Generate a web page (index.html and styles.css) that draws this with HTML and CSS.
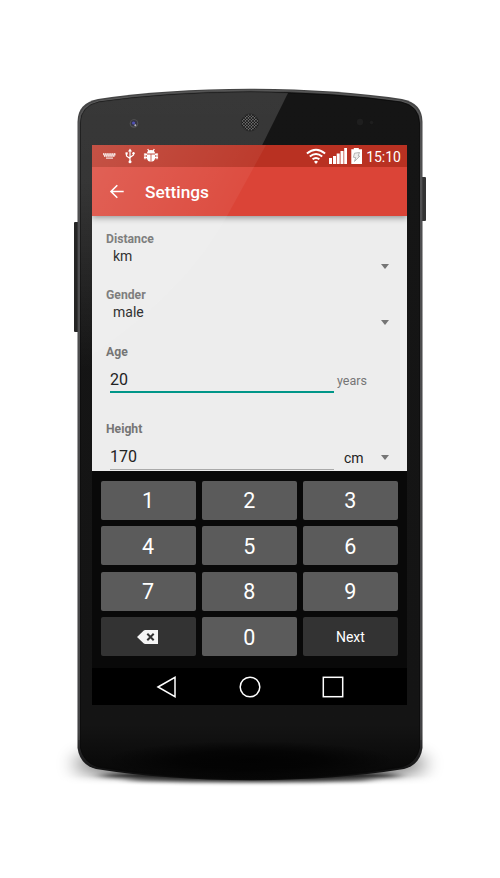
FILE: index.html
```html
<!DOCTYPE html>
<html lang="en">
<head>
<meta charset="utf-8">
<title>Settings</title>
<link rel="stylesheet" href="styles.css">
</head>
<body>
<main class="stage">
  <svg class="device" viewBox="0 0 500 878" aria-hidden="true">
    <defs>
      <linearGradient id="face" x1="0" y1="88" x2="0" y2="780" gradientUnits="userSpaceOnUse">
        <stop offset="0" stop-color="#151515"/><stop offset=".92" stop-color="#141414"/><stop offset="1" stop-color="#060606"/>
      </linearGradient>
      <radialGradient id="base"><stop offset="0" stop-color="#000"/><stop offset=".5" stop-color="#000" stop-opacity=".8"/><stop offset="1" stop-color="#000" stop-opacity="0"/></radialGradient>
      <linearGradient id="rim" x1="0" y1="88" x2="0" y2="780" gradientUnits="userSpaceOnUse">
        <stop offset="0" stop-color="#444"/><stop offset=".1" stop-color="#48484a"/><stop offset=".93" stop-color="#363638"/><stop offset="1" stop-color="#0a0a0a"/>
      </linearGradient>
      <linearGradient id="bezelGloss" x1="0" y1="90" x2="0" y2="400" gradientUnits="userSpaceOnUse">
        <stop offset="0" stop-color="#fff" stop-opacity=".15"/><stop offset=".3" stop-color="#fff" stop-opacity=".14"/><stop offset=".9" stop-color="#fff" stop-opacity="0"/>
      </linearGradient>
      <pattern id="mesh" width="3" height="3" patternUnits="userSpaceOnUse"><rect width="3" height="3" fill="#686868"/><circle cx="1" cy="1" r=".95" fill="#111"/><circle cx="2.5" cy="2.5" r=".8" fill="#111"/></pattern>
      <filter id="soft" x="-20%" y="-300%" width="140%" height="700%"><feGaussianBlur stdDeviation="7 2.200"/></filter>
      <filter id="wide" x="-30%" y="-80%" width="160%" height="260%"><feGaussianBlur stdDeviation="9"/></filter>
      <linearGradient id="fade" x1="0" y1="776" x2="0" y2="785" gradientUnits="userSpaceOnUse"><stop offset="0" stop-color="#fff"/><stop offset="1" stop-color="#000"/></linearGradient>
      <mask id="ground" maskUnits="userSpaceOnUse" x="30" y="700" width="440" height="100"><rect x="30" y="700" width="440" height="90" fill="url(#fade)"/></mask>
    </defs>
    <g mask="url(#ground)">
      <ellipse cx="250" cy="764" rx="178" ry="16" filter="url(#wide)" opacity=".62"/>
      <ellipse cx="250" cy="776" rx="150" ry="5" filter="url(#soft)" opacity=".8"/>
    </g>
    <ellipse cx="250" cy="779" rx="125" ry="3" filter="url(#soft)" opacity=".75"/>
    <rect x="74" y="222" width="5" height="110" rx="1" fill="#252525"/>
    <rect x="421" y="177" width="5" height="44" rx="1" fill="#333"/>
    <path fill="url(#rim)" d="M77.5 122Q77.500 103 98 99Q165 89 250 88.800Q335 89 402 99Q422.500 103 422.500 122V748Q420 765 404 769Q335 780 250 780.300Q165 780 96 769Q80 765 77.500 748Z"/>
    <path fill="none" stroke="#777" stroke-width=".6" opacity=".7" d="M79 740V123Q79 105 99 100.800Q165 90.600 250 90.200Q335 90.600 401 100.800Q421 105 421 123V740"/>
    <path fill="url(#face)" stroke="#080808" stroke-width=".8" d="M80.500 123Q81 106 99 102Q165 92.500 250 92Q335 92.500 401 102Q419 106 419.500 123V748Q417 762 402 767Q335 778.500 250 779Q165 778.500 98 767Q83 762 80.500 748Z"/>
    <ellipse cx="250" cy="760" rx="145" ry="19" fill="url(#base)" opacity=".8"/>
    <path fill="url(#bezelGloss)" d="M80.500 123Q81 106 99 102Q165 92.500 250 92Q270 92 288 93L227 216Q190 290 80.500 380Z"/>
    <circle cx="134" cy="123.500" r="4.300" fill="#555"/><circle cx="134" cy="123.200" r="3.200" fill="#353543"/><circle cx="133.600" cy="123" r="1.600" fill="#5050b4"/><circle cx="135.300" cy="125.300" r="1" fill="#bbb"/>
    <circle cx="250" cy="122.500" r="8.600" fill="url(#mesh)" stroke="#222" stroke-width=".7"/>
    <circle cx="360" cy="122" r="3.200" fill="#1e1e1e"/><circle cx="371.500" cy="122.500" r="1.800" fill="#1e1e1e"/>
  </svg>

  <section class="screen">
    <header class="status">
      <svg class="status-left" viewBox="0 0 60 22" aria-hidden="true">
        <path d="M0 9h13M1 11h11" stroke="#fff" stroke-width="1.500" stroke-dasharray="1.500 .6" fill="none"/><path d="M.5 10h12M3 13.200h7" stroke="#fff" stroke-width="1.200" opacity=".8"/>
        <path d="M27 5v11M23.500 8.500v2.500l3.500 2.500M30.500 8.500v1.500L27 12.500" fill="none" stroke="#fff" stroke-width="1.200"/><path d="M27 3.500l2 3h-4z" fill="#fff"/><circle cx="27" cy="16.800" r="1.500" fill="#fff"/><rect x="22.500" y="7.300" width="2.200" height="2.200" fill="#fff"/><circle cx="30.500" cy="8.200" r="1.200" fill="#fff"/>
        <path d="M44 8.600a4 3.500 0 0 1 8 0zM44 9.500h3.600v7.200q-3-.2-3.600-2.700zM48.400 9.500h3.600v4.500q-.6 2.500-3.600 2.700z" fill="#fff"/><path d="M44.700 4l1.500 2.500M51.300 4l-1.500 2.500M41.500 9.300h2.500M52 9.300h2.500M41 12.500h3M52 12.500h3" stroke="#fff" stroke-width="1.200"/><path d="M42.200 8.300v6M53.800 8.300v6" stroke="#fff" stroke-width="2.600" opacity=".65"/>
      </svg>
      <span class="spacer"></span>
      <svg class="status-right" viewBox="0 0 58 22" aria-hidden="true">
        <g fill="none" stroke="#fff" stroke-width="1.900"><path d="M.9 8.600Q10 1 19.100 8.600M3.800 11.600Q10 6.400 16.200 11.600M6.600 14.300Q10 11.500 13.400 14.300"/></g><path d="M8 16.700Q10 14.900 12 16.700L10 19z" fill="#fff"/>
        <g fill="#fff"><rect x="23" y="13" width="3" height="6"/><rect x="27" y="11" width="3" height="8"/><rect x="30.700" y="8.500" width="3" height="10.500"/><rect x="34.500" y="6" width="3" height="13"/><rect x="38.200" y="3" width="2.800" height="16"/></g>
        <path d="M45.300 4.300h2.500V3h5v1.300h3.200V19H45.300z" fill="#fff"/><path d="M48.500 8.200l5-.7-1.300 3.500 1.600.2-5.300 5.200 1.200-3.800-2.300-.3z" fill="#eee" stroke="#999" stroke-width=".7"/>
      </svg>
      <time class="clock">15:10</time>
    </header>

    <div class="appbar">
      <svg class="back" viewBox="0 0 16 16" aria-hidden="true"><path d="M14.700 7.500H2M8.300 1.200L2 7.500l6.300 6.300" fill="none" stroke="#fff" stroke-width="1.600"/></svg>
      <h1>Settings</h1>
    </div>

    <form class="content">
      <div class="field select">
        <label>Distance</label>
        <div class="choice"><span>km</span><i class="caret"></i></div>
      </div>
      <div class="field select">
        <label>Gender</label>
        <div class="choice"><span>male</span><i class="caret"></i></div>
      </div>
      <div class="field entry">
        <label>Age</label>
        <div class="entry-row"><span class="input active">20</span><span class="unit">years</span></div>
      </div>
      <div class="field entry">
        <label>Height</label>
        <div class="entry-row"><span class="input">170</span><span class="unit dark">cm</span><i class="caret"></i></div>
      </div>
    </form>

    <div class="keyboard">
      <span class="key">1</span><span class="key">2</span><span class="key">3</span>
      <span class="key">4</span><span class="key">5</span><span class="key">6</span>
      <span class="key">7</span><span class="key">8</span><span class="key">9</span>
      <span class="key action"><svg class="erase" viewBox="0 0 22 14" aria-hidden="true"><path d="M0 7L6.500.8Q7.200 0 8.300 0H21v14H8.300Q7.200 14 6.500 13.200z" fill="#f5f5f5"/><path d="M10.300 3.800l6.400 6.400M16.700 3.800l-6.400 6.400" stroke="#333" stroke-width="2"/></svg></span>
      <span class="key">0</span>
      <span class="key action">Next</span>
    </div>

    <nav class="navbar">
      <svg viewBox="0 0 22 22" aria-hidden="true"><path d="M2 11L19 1.300v19.400z" fill="none" stroke="#fff" stroke-width="1.500"/></svg>
      <svg viewBox="0 0 22 22" aria-hidden="true"><circle cx="11" cy="11" r="9.800" fill="none" stroke="#fff" stroke-width="1.500"/></svg>
      <svg viewBox="0 0 22 22" aria-hidden="true"><rect x="1.300" y="1.300" width="19.400" height="19.400" fill="none" stroke="#fff" stroke-width="1.500"/></svg>
    </nav>

    <svg class="gloss" viewBox="0 0 315 560" aria-hidden="true">
      <defs><linearGradient id="sheen" x1="0" y1="0" x2="150" y2="80" gradientUnits="userSpaceOnUse"><stop offset="0" stop-color="#fff" stop-opacity=".16"/><stop offset="1" stop-color="#fff" stop-opacity=".04"/></linearGradient></defs>
      <path d="M0 0H174L135 71H0z" fill="url(#sheen)"/>
      <path d="M0 71H135Q95 145 0 210z" fill="#fff" fill-opacity=".07"/>
    </svg>
  </section>
</main>
</body>
</html>
```
FILE: styles.css
```css
* { box-sizing: border-box; }
body { margin: 0; background: #fff; font-family: Roboto, "Liberation Sans", sans-serif; }
.stage { position: relative; width: 500px; height: 878px; padding: 145px 93px 0 92px; overflow: hidden; }
.device { position: absolute; left: 0; top: 0; width: 500px; height: 878px; }
.screen { position: relative; width: 315px; height: 560px; display: flex; flex-direction: column; background: #ededed; }
.gloss { position: absolute; left: 0; top: 0; width: 315px; height: 560px; pointer-events: none; }

.status { height: 22px; display: flex; align-items: center; background: #b93122; padding: 0 6px 0 11px; }
.status-left { width: 60px; height: 22px; }
.spacer { flex: 1; }
.status-right { width: 58px; height: 22px; margin-right: 1px; }
.clock { width: 36px; font-size: 14px; line-height: 22px; color: #fff; text-align: right; white-space: nowrap; padding-top: 1px; }

.appbar { position: relative; height: 49px; display: flex; align-items: center; background: #db4437; padding-left: 17px; box-shadow: 0 2px 6px rgba(0, 0, 0, .38); clip-path: inset(0 0 -14px 0); }
.back { width: 16px; height: 16px; }
h1 { margin: 1px 0 0 20px; font-size: 17.300px; line-height: 24px; font-weight: 500; color: #fff; }

.content { height: 255px; padding: 15px 14px 0; overflow: hidden; color: #222; }
.field label { display: block; height: 16px; font-size: 12.200px; line-height: 16px; font-weight: 700; color: #757575; }
.select { height: 56.400px; }
.choice { display: flex; height: 34px; font-size: 14px; line-height: 18px; padding: 0 4px 0 7px; justify-content: space-between; }
.caret { width: 0; height: 0; border: 4.500px solid transparent; border-top: 5px solid #757575; border-bottom: 0; }
.choice .caret { margin: 17px .5px 0 0; }
.entry { height: 77px; }
.entry-row { display: flex; padding: 10px 4px 0; align-items: flex-start; }
.input { width: 224px; height: 23px; flex: none; font-size: 16px; line-height: 20px; border-bottom: 1px solid #aaa; margin-right: 3px; }
.input.active { border-bottom: 2px solid #009688; }
.unit { font-size: 12.500px; line-height: 20px; color: #757575; padding-top: 1px; }
.unit.dark { font-size: 14px; color: #222; padding-left: 7px; }
.entry-row .caret { margin: 8px .5px 0 auto; }

.keyboard { height: 197px; padding: 9.500px 9px 12px 8.500px; display: grid; grid-template-columns: repeat(3, 1fr); grid-template-rows: repeat(4, 39px); gap: 6.500px 6px; background: #090909; }
.key { display: flex; align-items: center; justify-content: center; background: #5b5b5b; border-radius: 2px; color: #fff; font-size: 21.500px; padding-top: 1px; }
.key.action { background: #333; font-size: 14px; }
.erase { width: 22px; height: 14px; margin-top: -1px; }
.navbar { height: 37px; display: flex; justify-content: space-between; align-items: center; padding: 0 63px 0 64px; background: #000; }
.navbar svg { width: 22px; height: 22px; }
```
